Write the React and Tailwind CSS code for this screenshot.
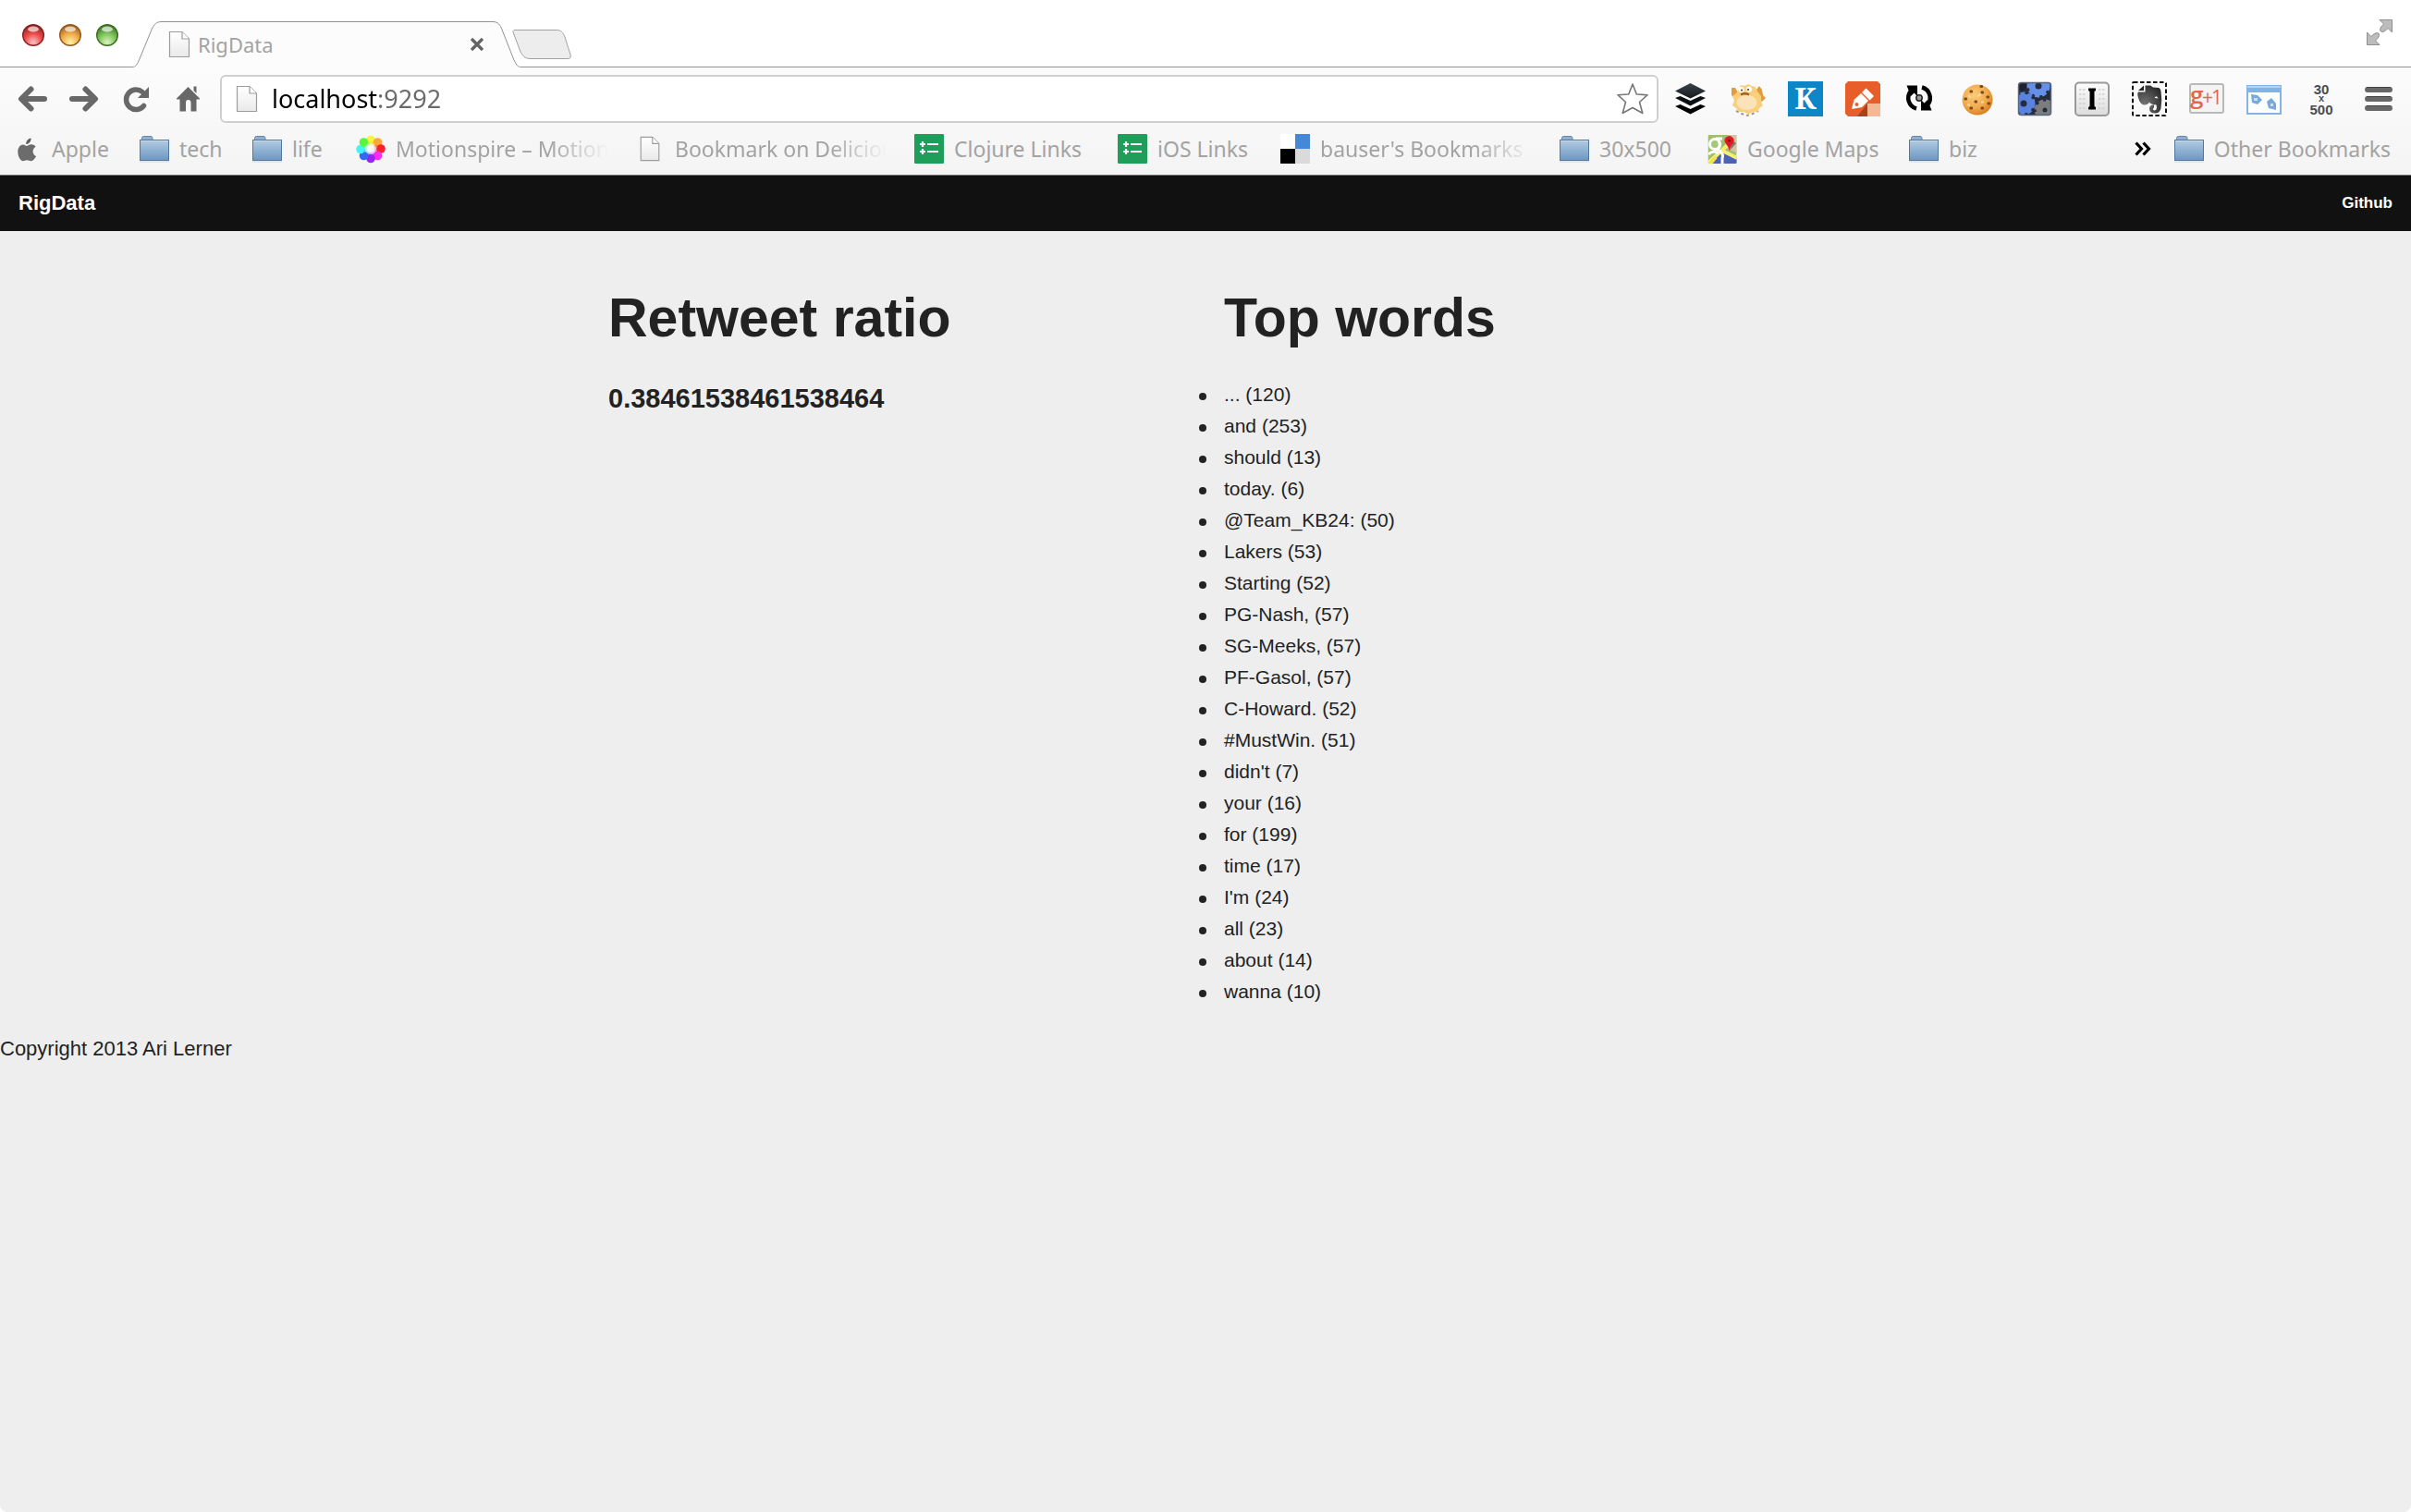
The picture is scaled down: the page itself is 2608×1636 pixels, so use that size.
import React from "react";

const words = [
  ["...", 120], ["and", 253], ["should", 13], ["today.", 6], ["@Team_KB24:", 50],
  ["Lakers", 53], ["Starting", 52], ["PG-Nash,", 57], ["SG-Meeks,", 57], ["PF-Gasol,", 57],
  ["C-Howard.", 52], ["#MustWin.", 51], ["didn't", 7], ["your", 16], ["for", 199],
  ["time", 17], ["I'm", 24], ["all", 23], ["about", 14], ["wanna", 10],
];

function Gradients() {
  return (
    <svg className="absolute size-0" aria-hidden="true">
      <defs>
        <linearGradient id="folder" x1="0" y1="0" x2="0" y2="1"><stop offset="0" stopColor="#b3cbe3" /><stop offset="1" stopColor="#6c97c1" /></linearGradient>
        <linearGradient id="paper" x1="0" y1="0" x2="0" y2="1"><stop offset="0" stopColor="#ffffff" /><stop offset="1" stopColor="#e9e9e9" /></linearGradient>
        <linearGradient id="steel" x1="0" y1="0" x2="0" y2="1"><stop offset="0" stopColor="#555" /><stop offset="0.3" stopColor="#6c6c6c" /><stop offset="1" stopColor="#6c6c6c" /></linearGradient>
        <linearGradient id="buffer" x1="0" y1="0" x2="0" y2="1"><stop offset="0" stopColor="#3b444b" /><stop offset="1" stopColor="#15191c" /></linearGradient>
        <radialGradient id="cookie" cx="0.4" cy="0.35" r="0.7"><stop offset="0" stopColor="#fbcb7a" /><stop offset="0.6" stopColor="#f0a94c" /><stop offset="1" stopColor="#d87a18" /></radialGradient>
        <linearGradient id="key" x1="0" y1="0" x2="0" y2="1"><stop offset="0" stopColor="#fdfdfd" /><stop offset="1" stopColor="#dcdcdc" /></linearGradient>
        <radialGradient id="elephant" cx="0.3" cy="0.7" r="0.8"><stop offset="0" stopColor="#777" /><stop offset="1" stopColor="#2b2b2b" /></radialGradient>
      </defs>
    </svg>
  );
}

function Paper({ className }) {
  return (
    <svg className={className} viewBox="0 0 24 30" aria-hidden="true">
      <path d="M1.5 1.5H15L22.5 9V28.5H1.5Z" fill="url(#paper)" stroke="#9c9c9c" strokeWidth="1.2" />
      <path d="M15 1.5V9H22.5" fill="#fff" stroke="#9c9c9c" strokeWidth="1.2" />
    </svg>
  );
}

function Folder() {
  return (
    <svg className="size-8" viewBox="0 0 32 32" aria-hidden="true">
      <path d="M2.5 7V4.5Q2.5 2.5 4.5 2.5H12Q14 2.5 14 4.5V7" fill="#90b0d0" stroke="#6686aa" />
      <path d="M0 30h32" stroke="#cfd3d8" />
      <rect x="0.5" y="6.5" width="31" height="22" fill="url(#folder)" stroke="#55779c" />
      <path d="M1 7.5h30" stroke="#c9daea" />
    </svg>
  );
}

function Apple() {
  return (
    <svg className="size-8" viewBox="0 0 32 32" aria-hidden="true">
      <path d="M20.500 4.500C20.800 8.500 18 11 15.200 11 15 7.500 17.500 5 20.500 4.500ZM15.800 13C17 13 18.500 11.300 21 11.300 23 11.300 24.800 12.300 25.700 13.700 21.200 16.300 22 22.300 26 24 25 26.500 22.800 29.200 20.500 29.200 18.800 29.200 18 28.300 16.200 28.300 14.300 28.300 13.500 29.200 11.900 29.200 9 29.200 6.300 24 6.300 19.300 6.300 14.500 9 11.600 12 11.600 13.800 11.600 15 13 15.800 13Z" fill="url(#steel)" />
    </svg>
  );
}

function Pinwheel() {
  const dots = [
    [16, 6.5, "#f4f53c"], [23.5, 9, "#f9a93a"], [27, 16, "#f5222c"], [23.5, 23.5, "#fb2cf4"],
    [16, 26.5, "#9823f5"], [8.5, 23.5, "#2f6bf0"], [5, 16.5, "#46f3f8"], [8.5, 9, "#57f83b"],
  ];
  return (
    <svg className="size-8" viewBox="0 0 32 32" aria-hidden="true">
      {dots.map(([x, y, c]) => <circle key={c} cx={x} cy={y} r="4.8" fill={c} />)}
      {dots.map(([x, y, c]) => <circle key={c} cx={(x + 16) / 2} cy={(y + 16) / 2} r="4" fill={c} opacity="0.4" />)}
      <circle cx="16" cy="16" r="6" fill="#fff" opacity="0.5" />
      <circle cx="16" cy="16" r="4" fill="#fff" opacity="0.8" />
    </svg>
  );
}

function Sheet() {
  return (
    <svg className="size-8" viewBox="0 0 32 32" aria-hidden="true">
      <rect width="32" height="32" rx="1" fill="#1f9e5a" />
      <path d="M6 11h6M9 8v6M6 19h6M9 16v6M14 11h12M14 19h12" stroke="#fff" strokeWidth="2.2" />
    </svg>
  );
}

function Delicious() {
  return (
    <svg className="size-8" viewBox="0 0 32 32" aria-hidden="true">
      <path d="M0 0h16v16H0z" fill="#fff" /><path d="M16 0h16v16H16z" fill="#4489d8" />
      <path d="M0 16h16v16H0z" fill="#000" /><path d="M16 16h16v16H16z" fill="#dadada" />
    </svg>
  );
}

function Maps() {
  return (
    <svg className="size-8" viewBox="0 0 32 32" aria-hidden="true">
      <clipPath id="mapbox"><rect x="0.5" y="1" width="31" height="31" rx="1" /></clipPath>
      <g clipPath="url(#mapbox)">
        <rect x="0.5" y="1" width="31" height="31" fill="#9dc069" />
        <path d="M22 1h10v20L18 14Z" fill="#d5c3a6" /><path d="M15 20 32 27v5H4Z" fill="#4a62b5" />
        <path d="M1 31 24 10M16 18 32 26" stroke="#f6ec7a" strokeWidth="4" />
        <path d="M3 32 9 25" stroke="#f4e14e" strokeWidth="4" />
        <circle cx="8" cy="11" r="5.5" fill="#a5c878" stroke="#fff" strokeWidth="3" />
        <path d="M9 5h7M12 7Q15 13 11 17 18 21 16 26V32M1 22Q6 17 12 21" fill="none" stroke="#fff" strokeWidth="3" />
      </g>
      <path d="M24 18 31 10 27 7Z" fill="#444" opacity="0.6" />
      <path d="M23.5 18Q22.500 13 19.500 10A5 5 0 1 1 28 9.500Q24.500 13 23.5 18Z" fill="#dd1b22" />
      <circle cx="23.500" cy="7" r="1.5" fill="#7d0f12" />
    </svg>
  );
}

const bookmarks = [
  { label: "Apple", icon: <Apple />, width: "w-[138px]" },
  { label: "tech", icon: <Folder />, width: "w-[122px]" },
  { label: "life", icon: <Folder />, width: "w-[112px]" },
  { label: "Motionspire – Motion", icon: <Pinwheel />, width: "w-[302px]", fade: true },
  { label: "Bookmark on Delicious", icon: <Paper className="h-7 w-8" />, width: "w-[302px]", fade: true },
  { label: "Clojure Links", icon: <Sheet />, width: "w-[220px]" },
  { label: "iOS Links", icon: <Sheet />, width: "w-[176px]" },
  { label: "bauser's Bookmarks", icon: <Delicious />, width: "w-[302px]", fade: true },
  { label: "30x500", icon: <Folder />, width: "w-[160px]" },
  { label: "Google Maps", icon: <Maps />, width: "w-[218px]" },
  { label: "biz", icon: <Folder />, width: "w-[110px]" },
];

function gear(cx, cy, r, color) {
  return (
    <g>
      <circle cx={cx} cy={cy} r={r} fill="none" stroke={color} strokeWidth="7" />
      <circle cx={cx} cy={cy} r={r + 4} fill="none" stroke={color} strokeWidth="3" strokeDasharray="5 3" />
    </g>
  );
}

const extensions = [
  ["Buffer", <>
    <path d="M18.500 2 35 10.500 18.500 18.500 2 10.500Z" fill="url(#buffer)" />
    <path d="M2 18 7.500 16 18.500 21 29.500 16 35 18 18.500 26.500Z" fill="#0c0f14" />
    <path d="M2 27 7.500 25 18.500 30 29.500 25 35 27 18.500 35.500Z" fill="#000" />
  </>],
  ["Pufferfish", <>
    <path d="M1 7 5 7 9 14 4 18 1 15ZM28 9 31 5 34 9 35 15 38 18 34 22 28 17Z" fill="#e29c3b" />
    <path d="M6 32 12 35 18 37 24 35 30 32" fill="none" stroke="#999" strokeWidth="2" strokeDasharray="3 3" />
    <path d="M9 8 11 4 15 5 19 3 23 5 27 6 29 11 33 16 33 22 35 26 31 29 29 33 24 33 19 36 15 33 9 33 6 29 2 26 4 21 2 16 6 13Z" fill="#f8cf7d" />
    <ellipse cx="17.500" cy="23" rx="11" ry="8" fill="#fce2b8" />
    <circle cx="11.500" cy="9" r="3" fill="#fff" /><circle cx="20" cy="8.500" r="3" fill="#fff" />
    <circle cx="12" cy="9.500" r="1" fill="#333" /><circle cx="19" cy="9" r="1" fill="#333" />
    <path d="M11 14.500Q15.500 12 20 14.500" fill="none" stroke="#a0602a" strokeWidth="2.500" />
  </>],
  ["Kippt", <>
    <rect width="38" height="38" fill="#0b86c6" />
    <text x="19" y="30" textAnchor="middle" fontSize="32" fontWeight="700" fill="#fff" fontFamily="Noto Serif, Liberation Serif, serif">K</text>
  </>],
  ["Highlighter", <>
    <path d="M3 0H35L38 3V24L24 38H3L0 35V3Z" fill="#e85e2b" />
    <path d="M24 24H38V38H24Z" fill="#f4b896" /><path d="M24 24V38H13Z" fill="#a8421a" />
    <path d="M7 30 9.500 20 17 13 25 21 18 28Z" fill="#fff" /><path d="M18 12 22.500 7.500 31 16 26.500 20.500Z" fill="#fff" />
    <circle cx="12.500" cy="25" r="2" fill="#e85e2b" />
  </>],
  ["Refresh", <>
    <path d="M15 29.500A11.800 11.800 0 0 1 9 10.500M21 6.500A11.800 11.800 0 0 1 27 25.500" fill="none" stroke="#000" strokeWidth="4.500" />
    <path d="M4.500 4.500H16V16L12.500 12.500 9 16ZM31.500 31.500H20V20L23.500 23.500 27 20Z" fill="#000" />
    <circle cx="18" cy="18" r="3.200" fill="#999" stroke="#222" strokeWidth="1.500" />
  </>],
  ["Cookies", <>
    <circle cx="19" cy="20" r="16.500" fill="url(#cookie)" />
    {[[12, 11], [23, 5.5], [24, 12], [6, 19], [17, 22], [30, 17], [31, 24], [12, 29], [24, 29]].map(([x, y]) => (
      <rect key={x + "-" + y} x={x - 1.5} y={y - 1.5} width="3.5" height="3" rx="1" fill="#7c4a20" />
    ))}
    <path d="M9 15l3 3M19 16l4-2M23 23l3-1M8 25l3 1" stroke="#fbd790" strokeWidth="2" />
  </>],
  ["Gears", <>
    <clipPath id="gearbox"><rect x="1.500" y="1.500" width="35" height="35" rx="3" /></clipPath>
    <g clipPath="url(#gearbox)">
      <rect width="38" height="38" fill="#252d3d" />
      {gear(23, 5, 7, "#668fe8")}{gear(7, 24, 7, "#5a83e0")}{gear(30, 31, 6, "#7d7d80")}
      <circle cx="5" cy="5" r="5" fill="#1d222c" />
    </g>
    <rect x="1.500" y="1.500" width="35" height="35" rx="3" fill="none" stroke="#59657a" strokeWidth="1.500" />
  </>],
  ["Instapaper", <>
    <rect x="1" y="1.500" width="36" height="35.500" rx="4" fill="url(#key)" stroke="#999" strokeWidth="2" />
    <path d="M5 9h7M5 14h7M5 19h7M5 24h7M5 29h7M26 9h7M26 14h7M26 19h7M26 24h7M26 29h7" stroke="#cfcfcf" strokeWidth="1.600" strokeDasharray="2.500 1.500" />
    <path d="M15 7.500H23V10L21.500 11V27L23 28V30.500H15V28L16.500 27V11L15 10Z" fill="#000" />
  </>],
  ["Evernote", <>
    <rect x="1" y="1" width="36" height="36" rx="1" fill="none" stroke="#111" strokeWidth="2" strokeDasharray="4.500 2.500" />
    <path d="M7 10 13 4.500V10Z" fill="#222" />
    <path d="M14.500 4.500H20L23 6.500 29 7Q31 7.500 31.500 11 33 20 31.500 29 30.500 34.500 25 34.500 19 34.500 19 29.500 19 25.500 24 25.500V28.500Q22.500 29 23 30.500 24 32 26 31 27.500 29.500 26.500 25.500 20 25 19 22.500 17 26 13 25.500 9 25 7 18 5.500 13 7 11.500H14.500Z" fill="url(#elephant)" />
    <path d="M24.500 18Q26.500 14.500 28.500 18.500Z" fill="#eee" />
  </>],
  ["Google plus", <>
    <rect x="1" y="3" width="36" height="31" rx="2" fill="#f4f4f4" stroke="#b9b9b9" strokeWidth="2" />
    <g fill="#e2684e" fontFamily="Open Sans, Noto Sans, sans-serif">
      <text x="1" y="24" fontSize="26" fontWeight="600">g</text>
      <text x="14" y="25" fontSize="21">+</text>
      <text x="24" y="25" fontSize="21">1</text>
    </g>
  </>],
  ["Window resizer", <>
    <rect x="1" y="5" width="36" height="30" fill="#fdfefe" stroke="#85b3e4" strokeWidth="2" />
    <path d="M0 4h38v8H0z" fill="#82b2e8" /><path d="M1 6h36" stroke="#b5d3f4" strokeWidth="2" />
    <path d="M5 14 12 15 17 20 12 25 6 23ZM22 22 27 18 32 24V31L24 29Z" fill="#79a9dc" />
    <path d="M8 18h4v3H8zM26 24h3v3h-3z" fill="#c9dff5" />
  </>],
  ["30x500", <>
    <g fill="#4c4c4c" fontWeight="700" fontFamily="Liberation Sans, sans-serif" textAnchor="middle">
      <text x="19" y="14" fontSize="15">30</text><text x="19" y="22" fontSize="11">x</text><text x="19" y="36" fontSize="15">500</text>
    </g>
  </>],
];

function TrafficLight({ label, edge, mid, glow }) {
  const id = "light-" + label;
  return (
    <button type="button" aria-label={label} className="size-6">
      <svg viewBox="0 0 24 24" className="size-6" aria-hidden="true">
        <defs>
          <radialGradient id={id} cx="0.5" cy="0.85" r="0.85">
            <stop offset="0" stopColor={glow} /><stop offset="0.5" stopColor={mid} /><stop offset="1" stopColor={edge} />
          </radialGradient>
        </defs>
        <circle cx="12" cy="12" r="11.3" fill={"url(#" + id + ")"} stroke={edge} strokeWidth="1.4" />
        <ellipse cx="12" cy="5.500" rx="6" ry="3" fill="#fff" opacity="0.65" />
      </svg>
    </button>
  );
}

function TabStrip() {
  return (
    <div className="flex h-[73px] items-end bg-white">
      <div className="flex h-full w-[140px] shrink-0 gap-4 border-b border-[#929292] pt-[26px] pl-6">
        <TrafficLight label="Close" edge="#8c1f20" mid="#ee4b4b" glow="#fbc4c4" />
        <TrafficLight label="Minimize" edge="#96591a" mid="#f0ac4a" glow="#fdf3a8" />
        <TrafficLight label="Zoom" edge="#3a6e22" mid="#7ec45c" glow="#dcf3c0" />
      </div>
      <svg className="h-[50px] w-9 shrink-0" viewBox="0 0 36 50" aria-hidden="true">
        <path d="M0 49.500H3C7 49.500 8 47 10 43L24 9C27 3 29 .5 35 .5H36V50H0Z" fill="#fcfcfc" />
        <path d="M0 49.500H3C7 49.500 8 47 10 43L24 9C27 3 29 .5 35 .5H36" fill="none" stroke="#929292" />
      </svg>
      <div className="flex h-[50px] w-[356px] shrink-0 items-center border-t border-[#929292] bg-[#fcfcfc] pr-1 pb-[2px] pl-[6px]">
        <Paper className="h-[30px] w-6" />
        <span className="ml-2 flex-1 text-[22px] leading-8 text-[#a3a3a3]">RigData</span>
        <button type="button" aria-label="Close tab" className="size-6">
          <svg viewBox="0 0 24 24" className="size-6" aria-hidden="true"><path d="M6 6 18 18M18 6 6 18" stroke="#636363" strokeWidth="3.200" /></svg>
        </button>
      </div>
      <svg className="h-[50px] w-9 shrink-0" viewBox="0 0 36 50" aria-hidden="true">
        <path d="M0 .5H1C7 .5 9 4 11 9L24 42C27 48 28 49.500 32 49.500H36V50H0Z" fill="#fcfcfc" />
        <path d="M0 .5H1C7 .5 9 4 11 9L24 42C27 48 28 49.500 32 49.500H36" fill="none" stroke="#929292" />
      </svg>
      <div className="flex h-full flex-1 items-start justify-between border-b border-[#929292] pr-5">
        <button type="button" aria-label="New tab" className="mt-[31px] -ml-[14px]">
          <svg className="h-[34px] w-[66px]" viewBox="0 0 66 34" aria-hidden="true">
            <path d="M3 1.500H48C53 1.500 55 4 57 9L63 28C64 31 63 32.500 60 32.500H19C14 32.500 11 29 9 25L1.500 5C.5 3 1 1.500 3 1.500Z" fill="#ededed" stroke="#a2a2a2" />
          </svg>
        </button>
        <button type="button" aria-label="Full screen" className="mt-[21px]">
          <svg className="size-7" viewBox="0 0 28 28" aria-hidden="true">
            <path d="M14 .5H27.500V14L23 9.500Q20 13.500 17 13.500 14 13 14.500 10.500 15 8 18.500 5ZM.5 14 5 18.500Q8 14.500 11.500 14.500 14 15 13.500 17.500 13 20 9.500 23L14 27.500H.5Z" fill="#bcbcbc" stroke="#8f8f8f" />
          </svg>
        </button>
      </div>
    </div>
  );
}

function NavButton({ label, children }) {
  return (
    <button type="button" aria-label={label} className="size-9">
      <svg className="size-9" viewBox="0 0 36 36" fill="none" stroke="#686868" strokeWidth="6" strokeLinecap="round" strokeLinejoin="round" aria-hidden="true">{children}</svg>
    </button>
  );
}

function Toolbar() {
  return (
    <div className="flex h-[60px] items-center pt-2 pr-4 pl-[17px]">
      <div className="flex shrink-0 gap-5">
        <NavButton label="Back"><path d="M16.500 7.500 6 18 16.500 28.500M7 18H31" /></NavButton>
        <NavButton label="Forward"><path d="M19.500 7.500 30 18 19.500 28.500M29 18H5" /></NavButton>
        <NavButton label="Reload">
          <path d="M26.500 25.500A10.700 10.700 0 1 1 25 10.500" strokeWidth="5.500" />
          <path d="M32 5V17H20Z" fill="#686868" stroke="none" />
        </NavButton>
        <NavButton label="Home"><path d="M18.500 5 31 17.500V18.500H27.500V31.500H21.500V22Q21.500 19 18.500 19 16 19 16 22V31.500H9.500V18.500H6V17.500ZM24.500 4.500H27.500V12L24.500 9Z" fill="#686868" stroke="none" /></NavButton>
      </div>
      <div className="ml-[17px] flex h-[52px] flex-1 items-center rounded-[6px] border-2 border-[#cfcfcf] bg-white pr-2 pl-[15px]">
        <Paper className="h-8 w-6 shrink-0" />
        <input
          aria-label="Address"
          defaultValue="localhost:9292"
          className="ml-[15px] min-w-0 flex-1 bg-[linear-gradient(to_right,#000_114px,#6a6a6a_114px)] bg-clip-text text-[27px] leading-10 text-transparent caret-black outline-none"
        />
        <button type="button" aria-label="Bookmark this page">
          <svg className="size-9" viewBox="0 0 36 36" aria-hidden="true">
            <path d="M18 2 22.300 13 34 13.700 25.500 21.500 28.800 33.500 18 27.500 7.200 33.500 10.500 21.500 2 13.700 13.700 13Z" fill="#fff" stroke="#777" strokeWidth="1.600" strokeLinejoin="round" />
          </svg>
        </button>
      </div>
      <div className="ml-4 flex shrink-0 gap-6">
        {extensions.map(([label, art]) => (
          <button key={label} type="button" aria-label={label} className="size-[38px]">
            <svg className="size-[38px]" viewBox="0 0 38 38" aria-hidden="true">{art}</svg>
          </button>
        ))}
        <button type="button" aria-label="Menu" className="size-[38px]">
          <svg className="size-[38px]" viewBox="0 0 38 38" aria-hidden="true">
            <path d="M7 9H31M7 19H31M7 29H31" stroke="#686868" strokeWidth="6" strokeLinecap="round" />
            <path d="M6 6.500H32M6 16.500H32M6 26.500H32" stroke="#444" strokeWidth="1" />
          </svg>
        </button>
      </div>
    </div>
  );
}

function BookmarksBar() {
  return (
    <nav aria-label="Bookmarks" className="flex h-14 items-center pr-[22px] pl-[13px] text-[23px] leading-8 text-[#a3a3a3]">
      {bookmarks.map((b) => (
        <a key={b.label} href="#" className={"flex shrink-0 items-center gap-[11px] " + b.width}>
          <span className="shrink-0">{b.icon}</span>
          {b.fade ? (
            <span className="w-[230px] overflow-hidden whitespace-nowrap [mask-image:linear-gradient(to_right,#000_165px,transparent_230px)]">{b.label}</span>
          ) : (
            <span className="whitespace-nowrap">{b.label}</span>
          )}
        </a>
      ))}
      <button type="button" aria-label="More bookmarks" className="ml-auto">
        <svg className="h-8 w-5" viewBox="0 0 20 32" aria-hidden="true"><path d="M2.500 9.500 8.500 16 2.500 22.500M10.500 9.500 16.500 16 10.500 22.500" fill="none" stroke="#000" strokeWidth="3.200" /></svg>
      </button>
      <a href="#" className="ml-6 flex items-center gap-[11px]">
        <Folder />
        <span className="whitespace-nowrap">Other Bookmarks</span>
      </a>
    </nav>
  );
}

export default function App() {
  return (
    <div className="min-h-screen bg-white font-['Noto_Sans',sans-serif]">
      <div className="flex min-h-screen flex-col overflow-hidden rounded-b-lg bg-[#eeeeee]">
        <Gradients />
        <header className="border-b border-[#6f6f6f] bg-white">
          <TabStrip />
          <div className="bg-linear-to-b from-[#fcfcfc] to-[#f4f4f4]">
            <Toolbar />
            <BookmarksBar />
          </div>
        </header>
        <div className="font-['Liberation_Sans',sans-serif] text-[#222222]">
          <nav className="flex h-[60px] items-center justify-between bg-[#111111] px-5 font-bold text-white">
            <a href="#" className="text-[22px] leading-8">RigData</a>
            <a href="#" className="text-[17px] leading-8">Github</a>
          </nav>
          <main className="mx-auto grid max-w-[1332px] grid-cols-2 pt-[52px]">
            <section className="px-5">
              <h1 className="mb-6 text-[59px] leading-[84px] font-bold">Retweet ratio</h1>
              <h4 className="text-[29px] leading-[42px] font-bold">0.38461538461538464</h4>
            </section>
            <section className="px-5">
              <h1 className="mb-6 text-[59px] leading-[84px] font-bold">Top words</h1>
              <ul className="text-[21px] leading-[34px]">
                {words.map(([word, count]) => (
                  <li key={word} className="relative before:absolute before:top-[15px] before:-left-[27px] before:size-2 before:rounded-full before:bg-[#222222]">
                    {word} ({count})
                  </li>
                ))}
              </ul>
            </section>
          </main>
          <footer className="mt-7 text-[22px] leading-[34px]">Copyright 2013 Ari Lerner</footer>
        </div>
      </div>
    </div>
  );
}
